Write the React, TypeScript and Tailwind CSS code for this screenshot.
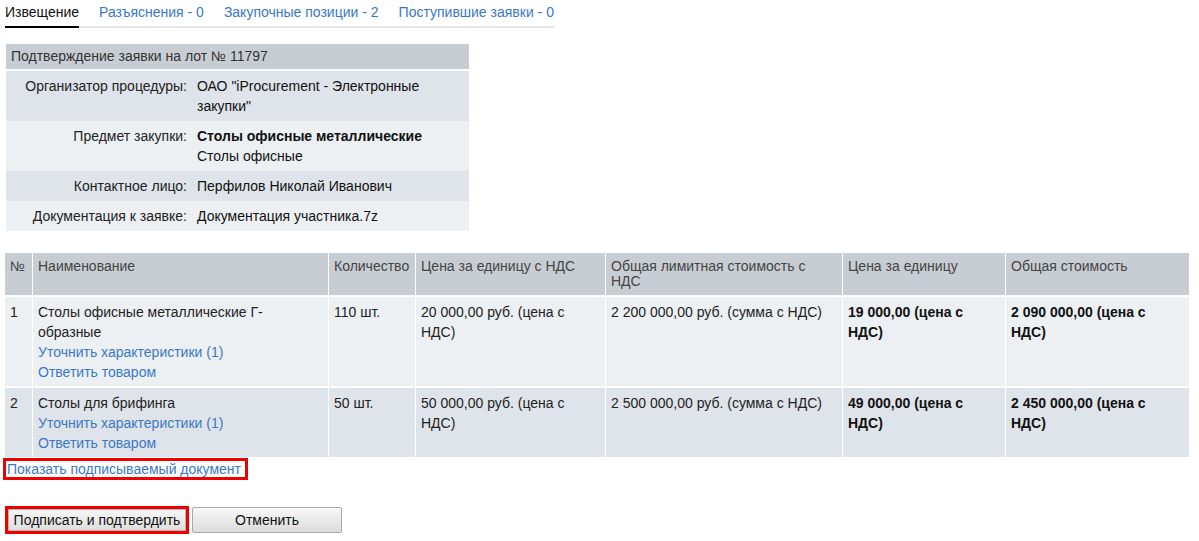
import React from 'react';

const font = { fontFamily: '"Liberation Sans", Arial, sans-serif' };

const info = [
  { label: 'Организатор процедуры:', value: <>ОАО "iProcurement - Электронные закупки"</> },
  {
    label: 'Предмет закупки:',
    value: (
      <>
        <b>Столы офисные металлические</b>
        <br />
        Столы офисные
      </>
    ),
  },
  { label: 'Контактное лицо:', value: <>Перфилов Николай Иванович</> },
  { label: 'Документация к заявке:', value: <>Документация участника.7z</> },
];

const rows = [
  {
    n: '1',
    name: 'Столы офисные металлические Г-образные',
    qty: '110 шт.',
    price: '20 000,00 руб. (цена с НДС)',
    limit: '2 200 000,00 руб. (сумма с НДС)',
    unit: '19 000,00 (цена с НДС)',
    total: '2 090 000,00 (цена с НДС)',
  },
  {
    n: '2',
    name: 'Столы для брифинга',
    qty: '50 шт.',
    price: '50 000,00 руб. (цена с НДС)',
    limit: '2 500 000,00 руб. (сумма с НДС)',
    unit: '49 000,00 (цена с НДС)',
    total: '2 450 000,00 (цена с НДС)',
  },
];

const heads = [
  'Наименование',
  'Количество',
  'Цена за единицу с НДС',
  'Общая лимитная стоимость с НДС',
  'Цена за единицу',
  'Общая стоимость',
];

export default function App() {
  return (
    <div className="min-h-screen bg-white text-[14px] text-[#222] pl-[5px]" style={font}>
      {/* tabs */}
      <div className="flex w-fit gap-[20px] border-b-2 border-[#e5e5e5] pt-[2px] leading-[20px]">
        <span className="-mb-[2px] border-b-2 border-black pb-[4px] text-[#111]">Извещение</span>
        <a className="pb-[4px] text-[#3b78c4]">Разъяснения - 0</a>
        <a className="pb-[4px] text-[#3b78c4]">Закупочные позиции - 2</a>
        <a className="pb-[4px] text-[#3b78c4]">Поступившие заявки - 0</a>
      </div>

      {/* lot info */}
      <div className="mt-[16px] ml-[1px] w-[463px] leading-[20px]">
        <div className="bg-[#c8cdd4] px-[5px] py-[2px] pb-[3px] text-[#333]">Подтверждение заявки на лот № 11797</div>
        <div className="mt-[2px]">
          {info.map((r, i) => (
            <div key={i} className={`flex py-[5px] ${i % 2 === 0 ? 'bg-[#dfe4ea]' : 'bg-[#edf0f3]'}`}>
              <div className="w-[182px] shrink-0 pr-[1px] text-right text-[#222]">{r.label}</div>
              <div className="pl-[9px] pr-[40px] text-[#111]">{r.value}</div>
            </div>
          ))}
        </div>
      </div>

      {/* positions */}
      <table className="mt-[20px] w-[1186px] table-fixed border-separate border-spacing-x-px border-spacing-y-[2px] -ml-[1px]">
        <colgroup>
          <col className="w-[27px]" />
          <col className="w-[295px]" />
          <col className="w-[86px]" />
          <col className="w-[189px]" />
          <col className="w-[236px]" />
          <col className="w-[162px]" />
          <col />
        </colgroup>
        <thead>
          <tr>
            <th className="bg-[#c8cdd4] px-[5px] pt-[6px] pb-[6px] h-[42px] text-left align-top font-normal leading-[15px] text-[#444]">№</th>
            {heads.map((h) => (
              <th key={h} className="bg-[#c8cdd4] px-[5px] pt-[6px] pb-[6px] text-left align-top font-normal leading-[15px] text-[#444]">
                {h}
              </th>
            ))}
          </tr>
        </thead>
        <tbody className="leading-[20px]">
          {rows.map((r, i) => {
            const bg = i % 2 === 0 ? 'bg-[#edf0f3]' : 'bg-[#dfe4ea]';
            const td = `${bg} px-[5px] pt-[5px] pb-[4px] align-top`;
            return (
              <tr key={r.n}>
                <td className={td}>{r.n}</td>
                <td className={td}>
                  <div>{r.name}</div>
                  <div className="text-[#3b78c4]">Уточнить характеристики (1)</div>
                  <div className="text-[#3b78c4]">Ответить товаром</div>
                </td>
                <td className={td}>{r.qty}</td>
                <td className={td}>{r.price}</td>
                <td className={td}>{r.limit}</td>
                <td className={`${td} font-bold text-[#111]`}>{r.unit}</td>
                <td className={`${td} font-bold text-[#111]`}>{r.total}</td>
              </tr>
            );
          })}
        </tbody>
      </table>

      <div className="-ml-[2px] -mt-[1px] w-fit border-[3px] border-[#ee0000] pl-[1px] pr-[4px] leading-[16px] text-[#3b78c4]">
        Показать подписываемый документ
      </div>

      <div className="mt-[26px] flex items-center gap-[3px]">
        <div className="border-[3px] border-[#ee0000]">
          <button className="h-[22px] w-[178px] border border-[#b5b5b5] bg-gradient-to-b from-[#f6f6f6] to-[#dedede] text-[14px] leading-[20px] text-[#111]">
            Подписать и подтвердить
          </button>
        </div>
        <button className="h-[26px] w-[150px] rounded-[2px] border border-[#a9a9a9] bg-gradient-to-b from-[#f8f8f8] to-[#dcdcdc] text-[14px] text-[#111]">
          Отменить
        </button>
      </div>
    </div>
  );
}
